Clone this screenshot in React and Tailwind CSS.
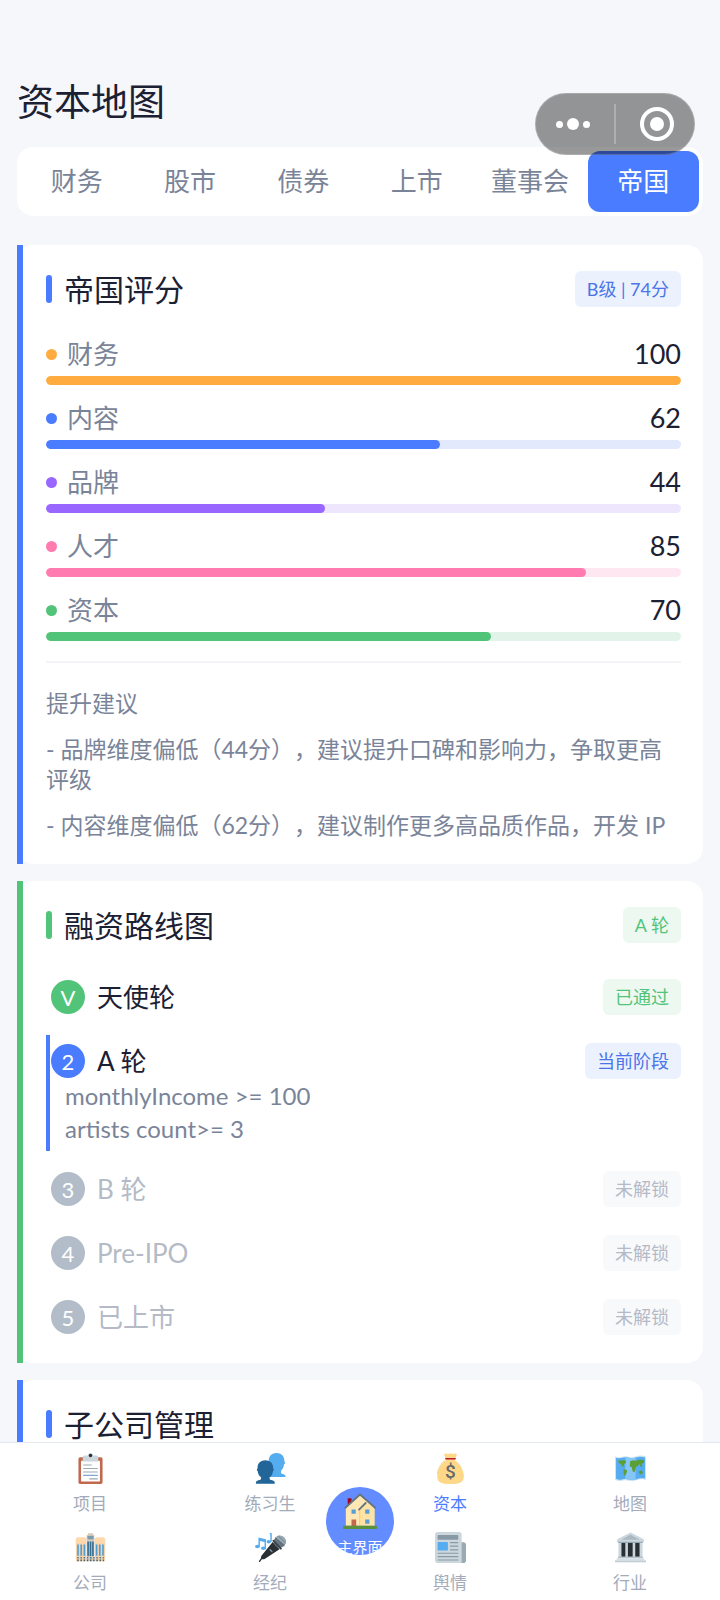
import { useState } from "react";
import clsx from "clsx";

const tabs = ["财务", "股市", "债券", "上市", "董事会", "帝国"];

const scores = [
  { label: "财务", value: 100, fill: "bg-[#ffab40]", track: "bg-[#fff3e0]" },
  { label: "内容", value: 62, fill: "bg-[#4a7cff]", track: "bg-[#e2e9fd]" },
  { label: "品牌", value: 44, fill: "bg-[#9966ff]", track: "bg-[#ede6fd]" },
  { label: "人才", value: 85, fill: "bg-[#ff7bb0]", track: "bg-[#fee7f1]" },
  { label: "资本", value: 70, fill: "bg-[#52c47a]", track: "bg-[#e2f4e9]" }
];

const suggestions = [
  "- 品牌维度偏低（44分），建议提升口碑和影响力，争取更高评级",
  "- 内容维度偏低（62分），建议制作更多高品质作品，开发 IP"
];

const stages = [
  { mark: "V", name: "天使轮", status: "passed" },
  {
    mark: "2",
    name: "A 轮",
    status: "current",
    conditions: ["monthlyIncome >= 100", "artists count>= 3"]
  },
  { mark: "3", name: "B 轮", status: "locked" },
  { mark: "4", name: "Pre-IPO", status: "locked" },
  { mark: "5", name: "已上市", status: "locked" }
];

const stageStyles = {
  passed: { text: "已通过", tone: "green", circle: "bg-[#52c47a]" },
  current: { text: "当前阶段", tone: "blue", circle: "bg-[#4a7cff]" },
  locked: { text: "未解锁", tone: "gray", circle: "bg-[#b2bdc9]" }
};

const badgeTones = {
  blue: "bg-[#ebf2fe] text-[#4a74e8]",
  green: "bg-[#edf8f1] text-[#52c47a]",
  gray: "bg-[#f8f9fb] text-[#b4bac6]"
};

function ClipboardIcon() {
  return (
    <svg viewBox="0 0 36 36" className="size-[31px]" aria-hidden="true">
      <rect x="4" y="5" width="28" height="31" rx="2" fill="#C1694F" />
      <rect x="7" y="9" width="22" height="24" rx="1" fill="#FFF" />
      <path
        fill="#CCD6DD"
        d="M25 3h-4c0-1.657-1.343-3-3-3s-3 1.343-3 3h-4c-1.104 0-2 .896-2 2v5h18V5c0-1.104-.896-2-2-2z"
      />
      <circle cx="18" cy="3" r="2" fill="#292F33" />
      <g stroke="#99AAB5" strokeWidth="1.3" strokeLinecap="round">
        <path d="M10 14h9M10 18h16M10 22h16M17 30h9" />
        <path d="M10 26h16" stroke="#7EA6D0" />
      </g>
    </svg>
  );
}

function PeopleIcon() {
  return (
    <svg viewBox="0 0 36 36" className="size-[31px]" aria-hidden="true">
      <path
        fill="#55ACEE"
        d="M25 0c5.500 0 9 3.600 9 8.500 0 .8.200 1.500.6 2.200.5 1 .2 2-.8 2.200-.5 4-1.900 6.300-3.600 7.600v2c0 1 1 1.500 2.300 2 2 .5 3 1.500 3 3.500H16V8.500C16 3.600 19.500 0 25 0z"
      />
      <path
        fill="#226699"
        d="M12 8.300c5.300 0 9 3.400 9 8.400 0 .8.300 1.400.6 2.100.4.900.2 1.900-.7 2.100-.4 3.700-1.900 6-3.900 7.300v1.600c0 1 1.200 1.400 3 1.900 2.200.5 3 1.600 3 3.900H1c0-2.300.9-3.400 3-3.900 1.900-.5 3-.9 3-1.900v-1.600c-2-1.300-3.400-3.600-3.900-7.300-.9-.2-1.100-1.200-.7-2.100.3-.7.600-1.300.600-2.100 0-5 3.700-8.400 9-8.400z"
      />
    </svg>
  );
}

function MoneyBagIcon() {
  return (
    <svg viewBox="0 0 36 36" className="size-[31px]" aria-hidden="true">
      <path
        fill="#FDD888"
        d="M11.500.8C13 .1 14.300 1.700 16 1c1.400-.6 2.600-.6 4 0 1.700.7 3-.9 4.500-.2 1.200.6.8 1.900.2 3.100L23 8.500c4.800 2.400 10.500 11.200 10.500 18.200C33.500 34.500 28.500 36 18 36S2.500 34.500 2.500 26.700C2.500 19.700 8.200 10.900 13 8.500l-1.700-4.600C10.700 2.700 10.300 1.400 11.500.8z"
      />
      <path d="M12.600 6.600h10.800" stroke="#BE1931" strokeWidth="1.800" strokeLinecap="round" />
      <path d="M11.500 8.700C7 11.500 3.500 18 2.800 24" stroke="#F4C76D" strokeWidth=".8" fill="none" />
      <text
        x="18"
        y="29.500"
        textAnchor="middle"
        fontSize="22"
        fontWeight="500"
        fontFamily="Roboto, sans-serif"
        fill="#67696B"
      >
        $
      </text>
    </svg>
  );
}

function MapIcon() {
  return (
    <svg viewBox="0 0 36 36" className="size-[31px]" aria-hidden="true">
      <path
        fill="#CFE3F2"
        d="M0 4c6 2.500 7.500-.2 12-.2S18 6 24 4s8-.8 12 0v27c-4-1-7-.8-12 1s-7.500-.4-12-.4S6 34 0 31z"
      />
      <path
        fill="#55ACEE"
        d="M1.200 5.500c5 1.700 6.900-.5 10.800-.5s6.200 1.900 12 .3 7.500-.9 10.800-.3v24.700c-3.800-.7-6.700-.4-10.800 1s-7.500-.5-12-.5-6 2.200-10.800-.2z"
      />
      <path fill="#84C6F5" d="M12 5c3.900 0 6.200 1.900 12 .3v25.400c-4.500 1.400-7.500-.5-12-.5z" />
      <path
        fill="#5C9F35"
        d="M3.500 8.500c3 .9 5.500-.6 8.500 0l1 2.500-2.500 2-.5 3-2-.5-1-2.500-2.500-1.500zM10 18.500l4 1.500-.5 3-2 4-1.500-3.500zM17.500 9.500l4-1 3 .5 4-1.500 5 .5.300 3-2.800 1.500.5 4-2-1-1-3-2 2.500-2 1-1.500 6-2.500-.5-1-5-2.500-1 .5-3.500zM28 21l3-.8 1.500 2.500-2 2.200-2.500-1.500z"
      />
    </svg>
  );
}

function OfficeIcon() {
  return (
    <svg viewBox="0 0 36 36" className="size-[31px]" aria-hidden="true">
      <path fill="#F5D3AD" d="M1 8l2-1.500h8.500L13 8v26H1zM23 8l1.500-1.500H33L35 8v26H23z" />
      <path fill="#FFD9AC" d="M1 8l2-1.500h8.500L13 8v5H1zM23 8l1.500-1.500H33L35 8v5H23z" />
      <path fill="#D9C9B8" d="M13.500 4L15 3V1.500h6V3l1.500 1v30h-9z" />
      <path fill="#7B9CAF" d="M14.500 4.500h7v4h-7z" />
      <path
        stroke="#4F9FD6"
        strokeWidth="1.900"
        d="M3.500 14.500v13M7.200 14.500v13M10.900 14.500v13M25.100 14.500v13M28.800 14.500v13M32.500 14.500v13"
      />
      <path stroke="#376F94" strokeWidth="1.900" d="M15.200 11v17M18 11v17M20.800 11v17" />
      <path stroke="#4C7893" strokeWidth="1.700" strokeDasharray="1.700 2" d="M2.600 30h31" />
      <path stroke="#435B69" strokeWidth="2" strokeDasharray="1.700 2" d="M2.600 33h31" />
    </svg>
  );
}

function MicIcon() {
  return (
    <svg viewBox="0 0 36 36" className="size-[31px]" aria-hidden="true">
      <g fill="#55ACEE">
        <ellipse cx="2.800" cy="16.800" rx="2.800" ry="2.100" />
        <ellipse cx="9.800" cy="18.800" rx="2.800" ry="2.100" />
        <ellipse cx="16" cy="11.300" rx="2.500" ry="2" />
        <path d="M4 6.500l8.800 2v10.300h-1.700v-7.100L5.700 10.400v6.400H4zM17 .8c.9 0 1.500.7 2.500.6v10h-1.700V4z" />
      </g>
      <path fill="#292F33" d="M20.500 11.500l8 8.500-17.300 11.300c-1.500.9-2.700.4-3.500-.3s-1-2-.2-3.400z" />
      <path d="M8.500 29.500L5.300 34" stroke="#292F33" strokeWidth="1.600" strokeLinecap="round" />
      <path d="M17.500 20.500l2.200 2.300" stroke="#8899A6" strokeWidth="1.600" strokeLinecap="round" />
      <circle cx="28.800" cy="11.300" r="7" fill="#66757F" />
      <path fill="#99AAB5" d="M23.700 6.500C27 3 32 3.500 34.500 7c1.500 2.500 1.500 5-.2 7.700z" />
      <path d="M21.500 10.300l8.500 9" stroke="#3A444B" strokeWidth="2.400" strokeLinecap="round" />
      <path d="M24 6.500l10 10M27 4.500l8.300 8" stroke="#58656E" strokeWidth=".7" />
    </svg>
  );
}

function NewspaperIcon() {
  return (
    <svg viewBox="0 0 36 36" className="size-[31px]" aria-hidden="true">
      <path fill="#99AAB5" d="M29 12h4c1.700 0 3 1.300 3 3v18c0 1.700-1.300 3-3 3h-6z" />
      <path fill="#CCD6DD" d="M3 0h25c1.700 0 3 1.300 3 3v33H3c-1.700 0-3-1.300-3-3V3c0-1.700 1.300-3 3-3z" />
      <rect x="3" y="3.500" width="24" height="5.500" rx="1" fill="#8899A6" />
      <rect x="3" y="11.500" width="12" height="10" rx="1" fill="#55ACEE" />
      <path
        stroke="#8899A6"
        strokeWidth="1.400"
        strokeLinecap="round"
        d="M18 12.300h8.500M18 16.500h8.500M18 20.700h8.500M3.700 24.700h22.800M3.700 28.700h22.800M3.700 32.500h22.800"
      />
    </svg>
  );
}

function BankIcon() {
  return (
    <svg viewBox="0 0 36 36" className="size-[31px]" aria-hidden="true">
      <path fill="#292F33" d="M6 12h24v17H6z" />
      <path
        fill="#CCD6DD"
        d="M4 12h3.500v17H4zM12 12h3v17h-3zM20.500 12h3v17h-3zM28.500 12H32v17h-3.500z"
      />
      <path fill="#CCD6DD" d="M18 .5L33.500 8.500v3h-31v-3z" />
      <path fill="#AAB8C2" d="M18 3.200L28.500 9h-21z" />
      <path fill="#99AAB5" d="M3.500 11.300h29v1.400h-29z" />
      <path fill="#B5C2CB" d="M3.500 28.500h29v2h-29z" />
      <path fill="#D5DEE4" d="M2 30.500h32V33H2z" />
      <path fill="#C2CED6" d="M0 33h36v2.200H0z" />
    </svg>
  );
}

function HouseIcon() {
  return (
    <svg viewBox="0 0 36 38" className="h-9 w-[34px] shrink-0" aria-hidden="true">
      <path fill="#A0041E" d="M5 5.500h4V13H5z" />
      <path fill="#FFE8B6" d="M3 15L18 1.500 33.500 15v19.500H3z" />
      <path fill="#FFD98A" d="M17.500 17l6.300-6.500L33.500 15v19.500h-16z" opacity=".35" />
      <path fill="#FFCC4D" d="M17.300 18h.9v16.500h-.9z" />
      <path
        d="M2.500 15.500L18 1.500l16 14M17 17.500l7-7"
        fill="none"
        stroke="#66757F"
        strokeWidth="2"
        strokeLinecap="round"
        strokeLinejoin="round"
      />
      <path fill="#5A9FD4" d="M9 17.500h4.500V22H9zM23.500 17.500H28V22h-4.500zM23.500 28H28v4.500h-4.500z" />
      <path fill="#C1694F" d="M9 28h5v7H9z" />
      <path fill="#5C913B" d="M1 34.500h34c.600 0 1 .5 1 1.200V37c0 .6-.4 1-1 1H1c-.6 0-1-.4-1-1v-1.300c0-.7.400-1.200 1-1.200z" />
    </svg>
  );
}

const navItems = [
  { label: "项目", icon: ClipboardIcon },
  { label: "练习生", icon: PeopleIcon },
  { label: "资本", icon: MoneyBagIcon, active: true },
  { label: "地图", icon: MapIcon },
  { label: "公司", icon: OfficeIcon },
  { label: "经纪", icon: MicIcon },
  { label: "舆情", icon: NewspaperIcon },
  { label: "行业", icon: BankIcon }
];

function Badge({ tone, children }) {
  return (
    <span
      className={clsx(
        "shrink-0 rounded-md px-3 text-[18px] leading-9 whitespace-nowrap",
        badgeTones[tone]
      )}
    >
      {children}
    </span>
  );
}

function Card({ title, accent, badge, children }) {
  return (
    <section className="relative rounded-2xl bg-white pt-[26px] pr-[22px] pb-5 pl-[29px]">
      <span className={clsx("absolute inset-y-0 left-0 w-1.5", accent)} />
      <div className="flex h-9 items-center justify-between">
        <h2 className="flex items-center gap-3 text-[30px] leading-9">
          <span className={clsx("h-7 w-1.5 rounded-full", accent)} />
          {title}
        </h2>
        {badge}
      </div>
      {children}
    </section>
  );
}

function ScoreRow({ item }) {
  return (
    <div>
      <div className="flex h-9 items-center justify-between">
        <span className="flex items-center gap-2.5 text-[26px] text-[#7a8499]">
          <span className={clsx("size-[11px] rounded-full", item.fill)} />
          {item.label}
        </span>
        <span className="text-[27px]">{item.value}</span>
      </div>
      <div
        role="progressbar"
        aria-label={item.label}
        aria-valuenow={item.value}
        className={clsx("mt-1 h-[9px] overflow-hidden rounded-full", item.track)}
      >
        <div
          className={clsx("h-full rounded-full", item.fill)}
          style={{ width: `${item.value}%` }}
        />
      </div>
    </div>
  );
}

function StageRow({ stage }) {
  const style = stageStyles[stage.status];
  return (
    <li
      className={clsx(
        "border-l-4 pt-2",
        stage.status === "current" ? "border-[#4a7cff] pb-1.5" : "border-transparent pb-2"
      )}
    >
      <div className="flex h-9 items-center justify-between pl-px">
        <div
          className={clsx(
            "flex items-center gap-3 text-[26px]",
            stage.status === "locked" && "text-[#b4bac6]"
          )}
        >
          <span
            className={clsx(
              "flex size-[34px] items-center justify-center rounded-full text-[22px] text-white",
              style.circle
            )}
          >
            {stage.mark}
          </span>
          {stage.name}
        </div>
        <Badge tone={style.tone}>{style.text}</Badge>
      </div>
      {stage.conditions?.map((condition) => (
        <p key={condition} className="pl-[15px] text-[24px] leading-[33px] text-[#7a8499]">
          {condition}
        </p>
      ))}
    </li>
  );
}

function App() {
  const [activeTab, setActiveTab] = useState("帝国");

  return (
    <div className="relative flex h-screen flex-col bg-[#f5f7fb] font-[Lato,'Noto_Sans_CJK_SC',sans-serif] text-[#1c2033] [text-spacing-trim:space-all]">
      <main className="min-h-0 flex-1 overflow-y-auto px-[17px] pt-[76px] pb-4 [scrollbar-width:none]">
        <h1 className="text-[37px] leading-[52px]">资本地图</h1>

        <div className="mt-[19px] flex gap-0.5 rounded-2xl bg-white p-1">
          {tabs.map((tab) => (
            <button
              key={tab}
              type="button"
              onClick={() => setActiveTab(tab)}
              className={clsx(
                "h-[61px] flex-1 rounded-xl text-[26px] whitespace-nowrap",
                activeTab === tab ? "bg-[#4a7cff] text-white" : "text-[#7a8499]"
              )}
            >
              {tab}
            </button>
          ))}
        </div>

        <div className="mt-[29px] space-y-[17px]">
          <Card
            title="帝国评分"
            accent="bg-[#4a7cff]"
            badge={<Badge tone="blue">B级 | 74分</Badge>}
          >
            <div className="mt-[29px] space-y-[15px]">
              {scores.map((item) => (
                <ScoreRow key={item.label} item={item} />
              ))}
            </div>
            <div className="mt-5 space-y-4 border-t-2 border-[#f3f4f7] pt-[25px] pb-1 text-[23px] leading-[30px] text-[#7a8499]">
              <h3>提升建议</h3>
              {suggestions.map((text) => (
                <p key={text}>{text}</p>
              ))}
            </div>
          </Card>

          <Card title="融资路线图" accent="bg-[#52c47a]" badge={<Badge tone="green">A 轮</Badge>}>
            <ul className="mt-7 space-y-3">
              {stages.map((stage) => (
                <StageRow key={stage.name} stage={stage} />
              ))}
            </ul>
          </Card>

          <Card title="子公司管理" accent="bg-[#4a7cff]" />
        </div>
      </main>

      <nav className="relative grid shrink-0 grid-cols-4 gap-y-4 border-t border-[#e4e8f0] bg-white pt-2.5 pb-[5px]">
        {navItems.map(({ label, icon: Icon, active }) => (
          <a
            key={label}
            href="#"
            className={clsx(
              "flex flex-col items-center gap-2 text-[17px] leading-6",
              active ? "text-[#4a7cff]" : "text-[#a3abba]"
            )}
          >
            <Icon />
            {label}
          </a>
        ))}
        <a
          href="#"
          className="absolute top-11 left-1/2 flex size-[68px] -translate-x-1/2 flex-col items-center overflow-hidden rounded-full bg-[#628cff] pt-1.5 text-[15px] leading-9 whitespace-nowrap text-white"
        >
          <HouseIcon />
          主界面
        </a>
      </nav>

      {/* mini program capsule */}
      <div className="absolute top-[93px] right-[25px] flex h-[62px] w-40 items-center rounded-full border border-white/20 bg-black/40">
        <button type="button" aria-label="更多" className="flex flex-1 items-center justify-center gap-1 pr-1">
          <span className="size-[7px] rounded-full bg-white" />
          <span className="size-3 rounded-full bg-white" />
          <span className="size-[7px] rounded-full bg-white" />
        </button>
        <span className="h-10 w-0.5 bg-white/25" />
        <button type="button" aria-label="关闭" className="flex flex-1 items-center justify-center pl-1">
          <span className="flex size-[34px] items-center justify-center rounded-full border-4 border-white">
            <span className="size-3.5 rounded-full bg-white" />
          </span>
        </button>
      </div>
    </div>
  );
}

export default App;
